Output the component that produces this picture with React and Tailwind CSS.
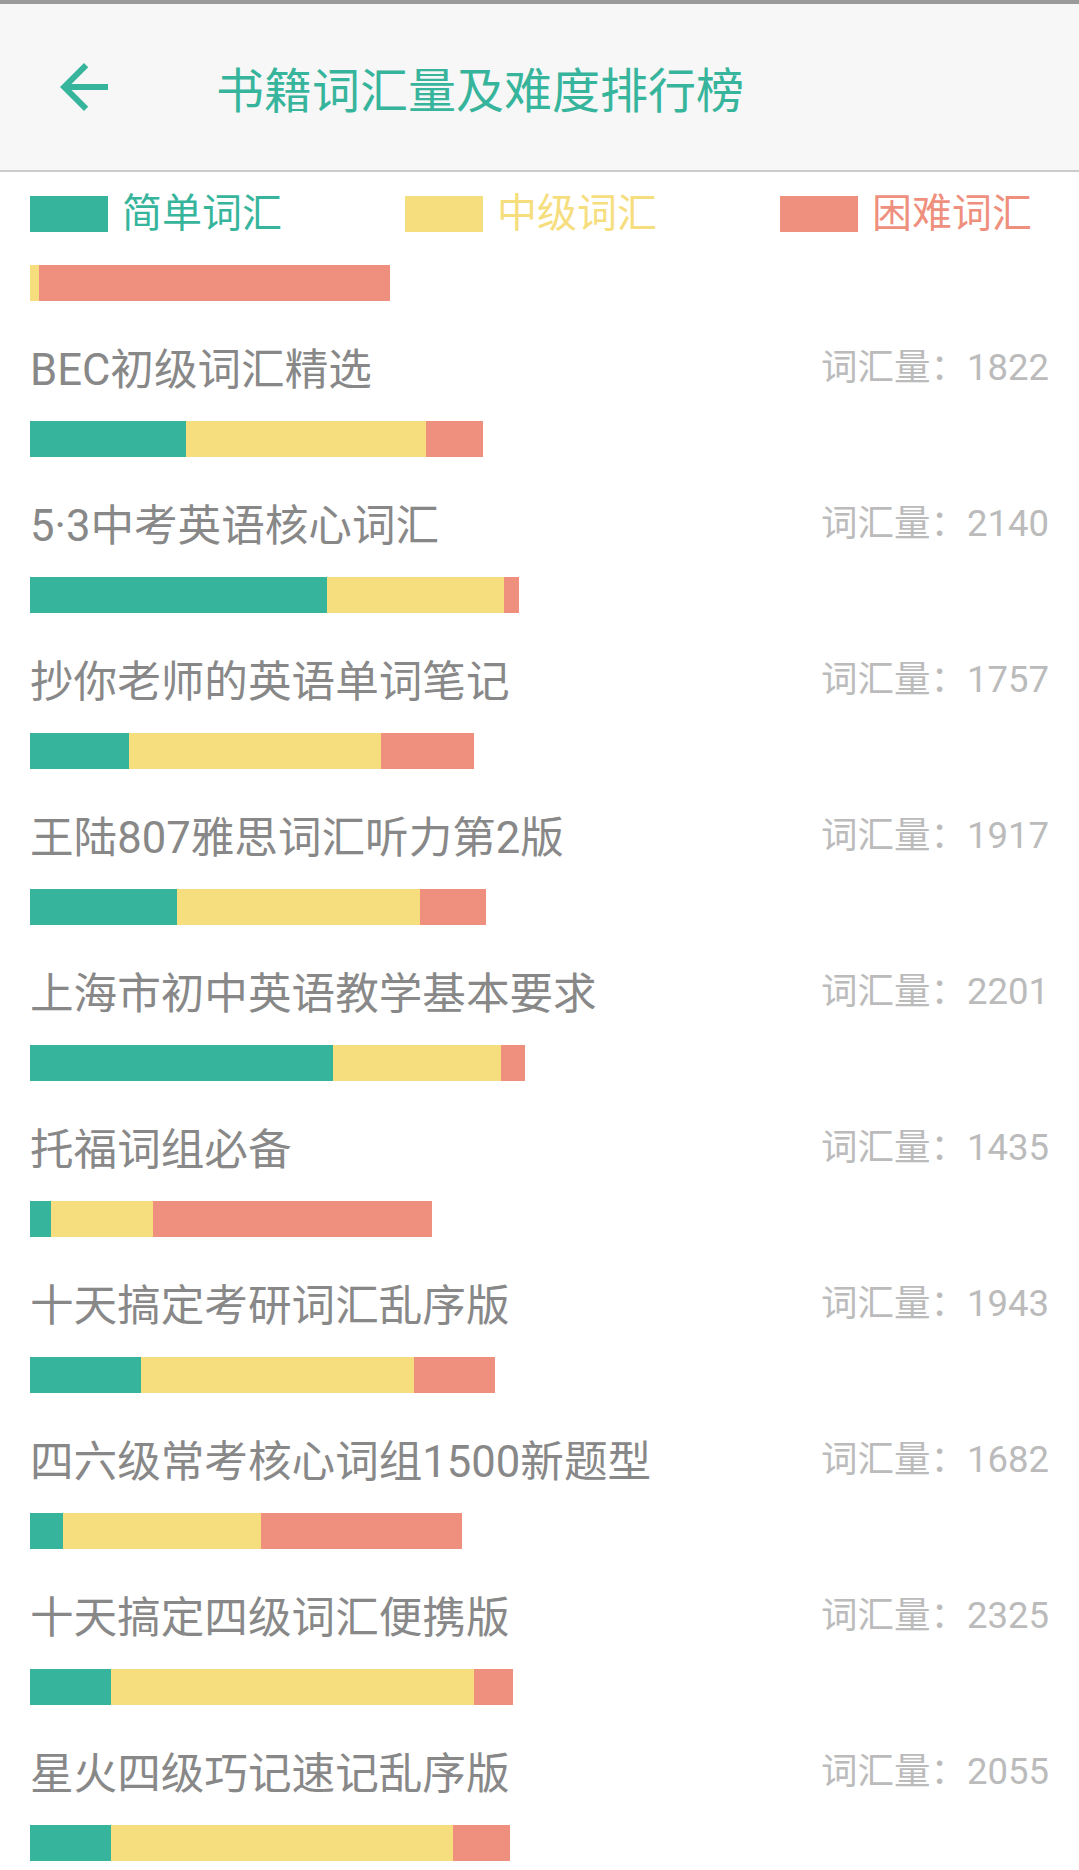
import React from "react";

// 颜色
const TEAL = "bg-[#37b59c]";
const YELLOW = "bg-[#f6de7e]";
const RED = "bg-[#ef8f7e]";

// 书籍列表: [简单, 中级, 困难] 条宽 (px)
const books = [
  { name: "BEC初级词汇精选", count: 1822, bars: [156, 240, 57] },
  { name: "5·3中考英语核心词汇", count: 2140, bars: [297, 177, 15] },
  { name: "抄你老师的英语单词笔记", count: 1757, bars: [99, 252, 93] },
  { name: "王陆807雅思词汇听力第2版", count: 1917, bars: [147, 243, 66] },
  { name: "上海市初中英语教学基本要求", count: 2201, bars: [303, 168, 24] },
  { name: "托福词组必备", count: 1435, bars: [21, 102, 279] },
  { name: "十天搞定考研词汇乱序版", count: 1943, bars: [111, 273, 81] },
  { name: "四六级常考核心词组1500新题型", count: 1682, bars: [33, 198, 201] },
  { name: "十天搞定四级词汇便携版", count: 2325, bars: [81, 363, 39] },
  { name: "星火四级巧记速记乱序版", count: 2055, bars: [81, 342, 57] },
];

function Bar({ bars }) {
  const [easy, mid, hard] = bars;
  return (
    <div className="flex h-[36px] ml-[30px]">
      {easy > 0 && <div className={`${TEAL} h-full`} style={{ width: easy }} />}
      {mid > 0 && <div className={`${YELLOW} h-full`} style={{ width: mid }} />}
      {hard > 0 && <div className={`${RED} h-full`} style={{ width: hard }} />}
    </div>
  );
}

function LegendItem({ color, text, label }) {
  return (
    <div className="flex items-center w-[375px] shrink-0">
      <div className={`${color} w-[78px] h-[36px] shrink-0`} />
      <span className={`ml-[14px] text-[40px] leading-[48px] ${text}`}>{label}</span>
    </div>
  );
}

export default function App() {
  return (
    <div className="w-[1079px] min-h-[1870px] bg-white overflow-hidden font-['Roboto','Noto_Sans_CJK_SC',sans-serif]">
      {/* 顶部状态条 */}
      <div className="h-[4px] bg-[#9a9a9a]" />

      {/* 标题栏 */}
      <header className="h-[168px] bg-[#f7f7f7] border-b-2 border-[#cccccc] flex items-center">
        <svg viewBox="0 0 24 24" className="ml-[48px] w-[72px] h-[72px] fill-[#37b59c]">
          <path d="M20 11H7.83l5.59-5.59L12 4l-8 8 8 8 1.41-1.41L7.83 13H20v-2z" />
        </svg>
        <h1 className="ml-[96px] text-[48px] leading-none text-[#37b59c] font-['Noto_Sans_CJK_SC',sans-serif]">
          书籍词汇量及难度排行榜
        </h1>
      </header>

      {/* 图例 */}
      <div className="flex pl-[30px] pt-[18px] overflow-hidden">
        <LegendItem color={TEAL} text="text-[#37b59c]" label="简单词汇" />
        <LegendItem color={YELLOW} text="text-[#f6de7e]" label="中级词汇" />
        <LegendItem color={RED} text="text-[#ef8f7e]" label="困难词汇" />
      </div>

      {/* 上一本书的条（标题已滚出） */}
      <div className="mt-[27px]">
        <Bar bars={[0, 9, 351]} />
      </div>

      {/* 列表 */}
      {books.map((b) => (
        <div key={b.name} className="pt-[44px]">
          <div className="flex items-start justify-between px-[30px]">
            <span className="text-[43.6px] leading-[52px] text-[#888888]">{b.name}</span>
            <span className="text-[36.5px] leading-[46px] text-[#bbbbbb]">词汇量：{b.count}</span>
          </div>
          <div className="mt-[24px]">
            <Bar bars={b.bars} />
          </div>
        </div>
      ))}
    </div>
  );
}
